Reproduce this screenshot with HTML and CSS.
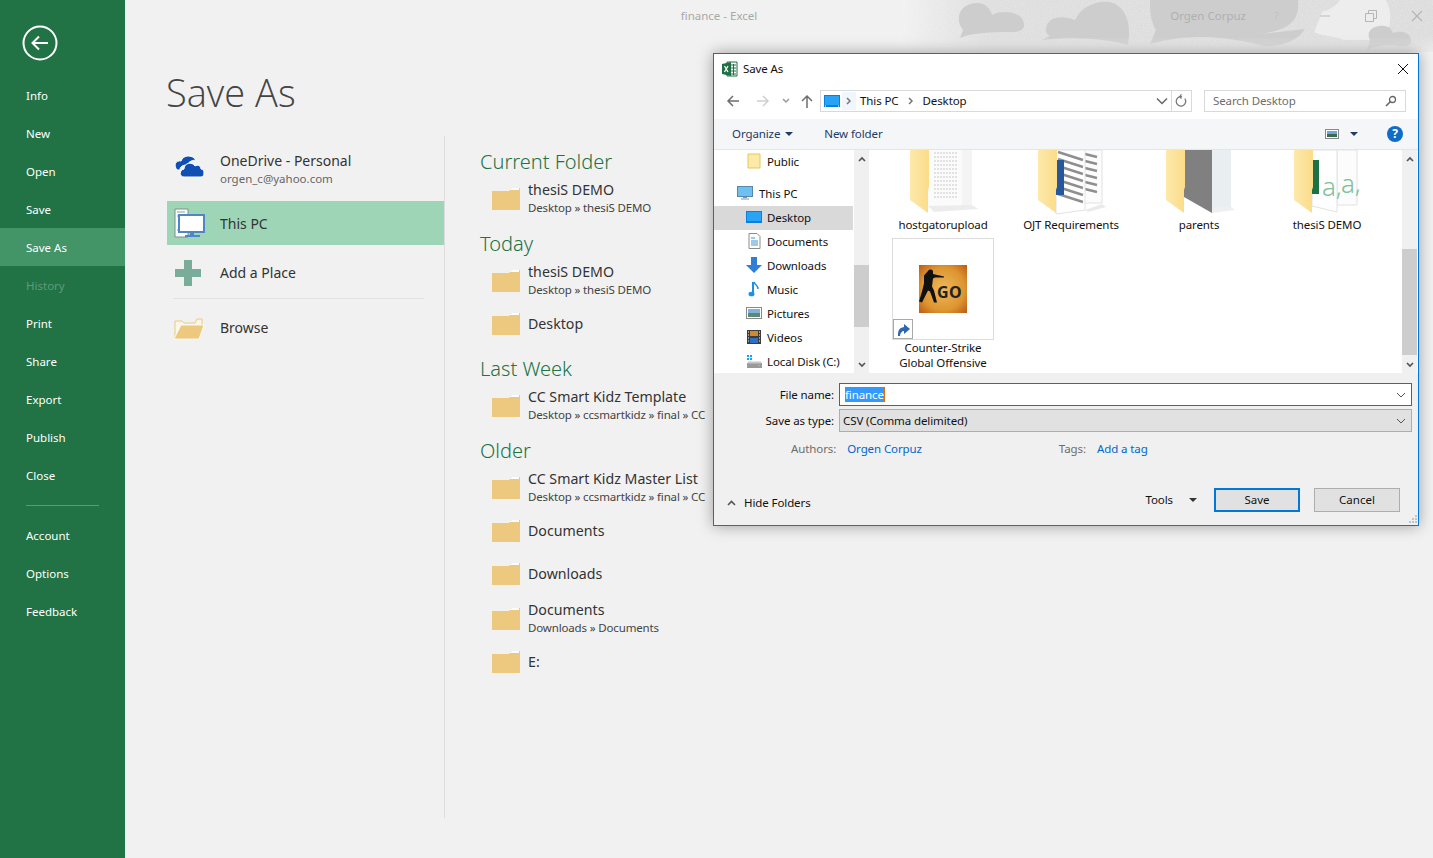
FILE: index.html
```html
<!DOCTYPE html>
<html lang="en">
<head>
    <meta charset="UTF-8">
    <title>Save As</title>
    <link rel="stylesheet" href="styles.css">
</head>
<body>
    <svg class="sprite" width="0" height="0">
        <defs>
            <symbol id="recent-folder" viewBox="0 0 28 24">
                <path d="M0 5h17l3-3h8v22H0z" fill="#edc87f"/>
                <path d="M18 4l2-2h7v2z" fill="#fff"/>
            </symbol>
            <linearGradient id="folder-fill" x1="0" y1="0" x2="1" y2="0">
                <stop offset="0" stop-color="#fde9ab"/>
                <stop offset="1" stop-color="#fbdc89"/>
            </linearGradient>
            <symbol id="folder-front" viewBox="0 0 70 66">
                <path d="M0 0h19v37l-1 3v23L0 50z" fill="url(#folder-fill)"/>
            </symbol>
        </defs>
    </svg>

    <aside class="sidebar">
        <svg class="back" width="36" height="36" viewBox="0 0 36 36" fill="none" stroke="#fff">
            <circle cx="18" cy="18" r="16.5" stroke-width="2"/>
            <path d="M11 18h15M17 11.500l-6.500 6.500 6.500 6.500" stroke-width="2"/>
        </svg>
        <nav class="nav">
            <a>Info</a>
            <a>New</a>
            <a>Open</a>
            <a>Save</a>
            <a class="active">Save As</a>
            <a class="disabled">History</a>
            <a>Print</a>
            <a>Share</a>
            <a>Export</a>
            <a>Publish</a>
            <a>Close</a>
            <hr>
            <a>Account</a>
            <a>Options</a>
            <a>Feedback</a>
        </nav>
    </aside>

    <main class="main">
        <header class="titlebar">
            finance - Excel
            <svg class="decor" width="533" height="52" viewBox="0 0 533 52">
                <defs>
                    <linearGradient id="decor-fade" x1="0" y1="0" x2="1" y2="0">
                        <stop offset="0" stop-color="#dedede" stop-opacity="0"/>
                        <stop offset="0.16" stop-color="#dedede"/>
                        <stop offset="1" stop-color="#dcdcdc"/>
                    </linearGradient>
                    <linearGradient id="decor-bottom" x1="0" y1="0" x2="0" y2="1">
                        <stop offset="0.7" stop-color="#f1f1f1" stop-opacity="0"/>
                        <stop offset="1" stop-color="#f1f1f1" stop-opacity="0.7"/>
                    </linearGradient>
                    <filter id="grain">
                        <feTurbulence type="fractalNoise" baseFrequency="0.9" numOctaves="2" seed="4"/>
                        <feColorMatrix values="0 0 0 0 1  0 0 0 0 1  0 0 0 0 1  1.6 0 0 0 -0.6"/>
                    </filter>
                </defs>
                <rect width="533" height="52" fill="url(#decor-fade)"/>
                <rect x="40" width="493" height="52" filter="url(#grain)" opacity="0.3"/>
                <path d="M440 0h46c6 12 6 26-2 40l-40 0c-8-4-24-4-30-8l8-20c6-2 12-4 18-12z" fill="#ededed"/>
                <g fill="#cdcdcd">
                    <path d="M60 38l3-8C55 20 58 5 75 3c10-1 15 5 17 12 8-5 30-5 32 9 1 6-6 9-14 8-20 0-40 1-50 6z"/>
                    <path d="M146 30c0-12 14-16 29-10 5-12 20-20 35-18 15 4 22 20 18 43-18-5-48-9-86-5l8-4c-3-1-4-4-4-6z"/>
                    <path d="M250 0h148c2 20-8 30-38 34l45-5c-5 9-20 18-40 17-25-6-65-16-115-2l6-14c-6-10-6-20-6-30z"/>
                    <path d="M467 50l3-10c-5-10 5-15 15-14 5 1 7 4 8 7 7-3 19-1 18 9-1 4-6 5-11 4-10-2-25 0-33 4z"/>
                </g>
                <rect width="533" height="52" fill="url(#decor-bottom)"/>
            </svg>
            <div class="window-controls">
                <span class="user">Orgen Corpuz</span>
                <span class="help">?</span>
                <svg class="win-icon min" width="12" height="12" viewBox="0 0 12 12"><path d="M1 6h10" stroke="#bdbdbd" fill="none"/></svg>
                <svg class="win-icon restore" width="12" height="12" viewBox="0 0 12 12"><path d="M.5 3.500h8v8h-8zM3.500 3V.5h8v8H9" stroke="#b5b5b5" fill="none"/></svg>
                <svg class="win-icon close" width="12" height="12" viewBox="0 0 12 12"><path d="M1 1l10 10M11 1L1 11" stroke="#b5b5b5" stroke-width="1.200" fill="none"/></svg>
            </div>
        </header>

        <h1 class="page-title">Save As</h1>

        <div class="columns">
            <section class="places">
                <div class="place">
                    <svg class="place-icon cloud" width="32" height="24" viewBox="0 0 32 24">
                        <path d="M4 16C0 11 3 6 8 7c2-6 11-7 15-1-5 0-8 3-9 5-5 0-7 2-7 5z" fill="#0f4fb3" stroke="#fff"/>
                        <path d="M11 23c-5 0-5-7 0-8 0-6 8-8 11-3 3-2 6 0 6 3 4 0 4 8 0 8z" fill="#0f4fb3" stroke="#fff"/>
                    </svg>
                    <div>
                        <div class="place-name">OneDrive - Personal</div>
                        <div class="place-sub">orgen_c@yahoo.com</div>
                    </div>
                </div>
                <div class="place selected">
                    <svg class="place-icon" width="32" height="30" viewBox="0 0 32 30">
                        <path d="M2 1h13v28H2z" fill="#fff" stroke="#7b8f85"/>
                        <path d="M4 4h8M4 8h8M4 22h8" stroke="#8aa196"/>
                        <rect x="6" y="7" width="25" height="17" fill="#fff" stroke="#4f86c6" stroke-width="2"/>
                        <path d="M17 24h4v3h-4zM12 27h15v2H12z" fill="#4f86c6"/>
                    </svg>
                    <div class="place-name">This PC</div>
                </div>
                <div class="place">
                    <svg class="place-icon" width="32" height="28" viewBox="0 0 32 28">
                        <path d="M11 1h8v9h9v8h-9v9h-8v-9H2v-8h9z" fill="#7aac9a"/>
                    </svg>
                    <div class="place-name">Add a Place</div>
                </div>
                <hr class="place-rule">
                <div class="place">
                    <svg class="place-icon" width="32" height="24" viewBox="0 0 32 24">
                        <path d="M2 22V5h7l2 2h11l2-4h5v7" fill="#fdf6e6" stroke="#edc87f"/>
                        <path d="M8 9h23l-5 14H1z" fill="#edc87f" stroke="#fff" stroke-width=".8"/>
                    </svg>
                    <div class="place-name">Browse</div>
                </div>
            </section>

            <section class="recent">
                <h2>Current Folder</h2>
                <div class="recent-item">
                    <svg class="recent-icon"><use href="#recent-folder"/></svg>
                    <div>
                        <div class="recent-name">thesiS DEMO</div>
                        <div class="recent-path">Desktop » thesiS DEMO</div>
                    </div>
                </div>

                <h2>Today</h2>
                <div class="recent-item">
                    <svg class="recent-icon"><use href="#recent-folder"/></svg>
                    <div>
                        <div class="recent-name">thesiS DEMO</div>
                        <div class="recent-path">Desktop » thesiS DEMO</div>
                    </div>
                </div>
                <div class="recent-item">
                    <svg class="recent-icon"><use href="#recent-folder"/></svg>
                    <div class="recent-name">Desktop</div>
                </div>

                <h2>Last Week</h2>
                <div class="recent-item">
                    <svg class="recent-icon"><use href="#recent-folder"/></svg>
                    <div>
                        <div class="recent-name">CC Smart Kidz Template</div>
                        <div class="recent-path">Desktop » ccsmartkidz » final » CC</div>
                    </div>
                </div>

                <h2>Older</h2>
                <div class="recent-item">
                    <svg class="recent-icon"><use href="#recent-folder"/></svg>
                    <div>
                        <div class="recent-name">CC Smart Kidz Master List</div>
                        <div class="recent-path">Desktop » ccsmartkidz » final » CC</div>
                    </div>
                </div>
                <div class="recent-item">
                    <svg class="recent-icon"><use href="#recent-folder"/></svg>
                    <div class="recent-name">Documents</div>
                </div>
                <div class="recent-item">
                    <svg class="recent-icon"><use href="#recent-folder"/></svg>
                    <div class="recent-name">Downloads</div>
                </div>
                <div class="recent-item nudge">
                    <svg class="recent-icon"><use href="#recent-folder"/></svg>
                    <div>
                        <div class="recent-name">Documents</div>
                        <div class="recent-path">Downloads » Documents</div>
                    </div>
                </div>
                <div class="recent-item">
                    <svg class="recent-icon"><use href="#recent-folder"/></svg>
                    <div class="recent-name">E:</div>
                </div>
            </section>
        </div>
    </main>

    <!-- Save As dialog -->
    <div class="dialog">
        <div class="dlg-title">
            <svg width="16" height="16" viewBox="0 0 16 16">
                <path d="M5 1h10v14H5z" fill="#fff" stroke="#1e7145"/>
                <path d="M9 4h5M9 7h5M9 10h5M9 13h5M11.500 3v11" stroke="#1e7145"/>
                <path d="M0 3l9-2v14l-9-2z" fill="#1e7145"/>
                <path d="M2.500 5l3.500 6M6 5l-3.500 6" stroke="#fff" stroke-width="1.300"/>
            </svg>
            <span class="dlg-title-text">Save As</span>
            <svg class="dlg-close" width="12" height="12" viewBox="0 0 12 12"><path d="M1 1l10 10M11 1L1 11" stroke="#111" fill="none"/></svg>
        </div>

        <div class="dlg-address">
            <svg class="addr-btn back-btn" width="14" height="14" viewBox="0 0 14 14"><path d="M13 7H2M7 2L2 7l5 5" stroke="#6e6e6e" stroke-width="1.500" fill="none"/></svg>
            <svg class="addr-btn fwd-btn" width="14" height="14" viewBox="0 0 14 14"><path d="M1 7h11M7 2l5 5-5 5" stroke="#d0d0d0" stroke-width="1.500" fill="none"/></svg>
            <svg class="addr-btn drop-btn" width="8" height="6" viewBox="0 0 8 6"><path d="M1 1l3 3 3-3" stroke="#9a9a9a" stroke-width="1.500" fill="none"/></svg>
            <svg class="addr-btn up-btn" width="14" height="14" viewBox="0 0 14 14"><path d="M7 14V2M2 7l5-5 5 5" stroke="#6e6e6e" stroke-width="1.500" fill="none"/></svg>
            <div class="breadcrumb">
                <svg class="crumb-pc" width="16" height="12" viewBox="0 0 16 12"><rect width="16" height="12" fill="#0a7fe0"/><rect x="1" y="1" width="14" height="9" fill="#29a4f5"/><path d="M1 11h1M14 11h1" stroke="#fff"/></svg>
                <span class="crumb-box"><svg width="6" height="8" viewBox="0 0 6 8"><path d="M1 1l3 3-3 3" stroke="#777" stroke-width="1.500" fill="none"/></svg></span>
                <span>This PC</span>
                <svg class="crumb-sep" width="6" height="8" viewBox="0 0 6 8"><path d="M1 1l3 3-3 3" stroke="#777" stroke-width="1.500" fill="none"/></svg>
                <span>Desktop</span>
                <svg class="crumb-drop" width="12" height="8" viewBox="0 0 12 8"><path d="M1 1.500l5 5 5-5" stroke="#666" stroke-width="1.500" fill="none"/></svg>
                <svg class="crumb-refresh" width="20" height="20" viewBox="0 0 20 20"><path d="M13.500 7.500a5 5 0 1 1-3-2H8M10 3l-2 2.500 2 2" stroke="#777" stroke-width="1.300" fill="none"/></svg>
            </div>
            <div class="search">
                <span>Search Desktop</span>
                <svg width="12" height="12" viewBox="0 0 12 12"><circle cx="7.500" cy="4.500" r="3" stroke="#666" stroke-width="1.300" fill="none"/><path d="M5.500 6.500L1 11" stroke="#666" stroke-width="1.600"/></svg>
            </div>
        </div>

        <div class="dlg-toolbar">
            <span class="tool-btn">Organize</span>
            <i class="caret navy"></i>
            <span class="tool-btn new-folder">New folder</span>
            <svg class="view-icon" width="14" height="10" viewBox="0 0 14 10"><rect x=".5" y=".5" width="13" height="9" fill="#fff" stroke="#8a8a8a"/><rect x="2" y="2" width="10" height="3" fill="#6fa8d6"/><rect x="2" y="5" width="10" height="3" fill="#3c6b52"/></svg>
            <i class="caret navy view-caret"></i>
            <span class="help-btn">?</span>
        </div>

        <div class="dlg-body">
            <div class="tree">
                <div class="tree-item indent"><svg width="14" height="16" viewBox="0 0 14 16"><path d="M1 1h12v14H1z" fill="#fde9a8" stroke="#eac55c"/></svg>Public</div>
                <div class="tree-item root"><svg width="16" height="14" viewBox="0 0 16 14"><rect x=".5" y=".5" width="15" height="10" fill="#6cc0f2" stroke="#5a87a8"/><path d="M6 11h4v1H6zM4 12.500h8v1H4z" fill="#7a97ad"/></svg>This PC</div>
                <div class="tree-item indent current"><svg width="16" height="12" viewBox="0 0 16 12"><rect width="16" height="12" fill="#0a7fe0"/><rect x="1" y="1" width="14" height="9" fill="#29a4f5"/></svg>Desktop</div>
                <div class="tree-item indent"><svg width="14" height="16" viewBox="0 0 14 16"><path d="M2 .5h8l3 3v12H2z" fill="#fff" stroke="#8c8c8c"/><path d="M4 5h4M4 8h7M4 10h7M4 12h7" stroke="#3b93d6"/></svg>Documents</div>
                <div class="tree-item indent"><svg width="16" height="16" viewBox="0 0 16 16"><path d="M5 0h6v8h5l-8 8-8-8h5z" fill="#2f7fd8"/></svg>Downloads</div>
                <div class="tree-item indent"><svg width="14" height="16" viewBox="0 0 14 16"><path d="M6 1v11" stroke="#1c8fe8" stroke-width="2"/><ellipse cx="4.500" cy="13" rx="3" ry="2.300" fill="#1c8fe8"/><path d="M7 1c1 3 4 3 4 7" stroke="#1c8fe8" stroke-width="1.500" fill="none"/></svg>Music</div>
                <div class="tree-item indent"><svg width="16" height="12" viewBox="0 0 16 12"><rect x=".5" y=".5" width="15" height="11" fill="#fff" stroke="#8a8a8a"/><rect x="2" y="2" width="12" height="4" fill="#7fb3dc"/><rect x="2" y="6" width="12" height="4" fill="#5d8a74"/></svg>Pictures</div>
                <div class="tree-item indent"><svg width="14" height="14" viewBox="0 0 14 14"><rect width="14" height="14" fill="#3c3c3c"/><rect x="3" y="1" width="8" height="5" fill="#d08a2d"/><rect x="3" y="8" width="8" height="5" fill="#2f6fc4"/><path d="M1 2h1M1 5h1M1 8h1M1 11h1M12 2h1M12 5h1M12 8h1M12 11h1" stroke="#fff"/></svg>Videos</div>
                <div class="tree-item indent"><svg width="16" height="14" viewBox="0 0 16 14"><path d="M1 1h2v2H1zM4 1h2v2H4zM1 4h2v2H1zM4 4h2v2H4z" fill="#19a3ee"/><rect x="1" y="9" width="15" height="5" fill="#9a9a9a"/><rect x="2" y="7.500" width="13" height="2" fill="#c8c8c8"/><path d="M12 11.500h2" stroke="#6fe07f"/></svg>Local Disk (C:)</div>
            </div>
            <div class="scrollbar tree-scroll">
                <svg class="arrow-up" width="8" height="6" viewBox="0 0 8 6"><path d="M1 5l3-3 3 3" stroke="#555" stroke-width="1.700" fill="none"/></svg>
                <div class="thumb"></div>
                <svg class="arrow-down" width="8" height="6" viewBox="0 0 8 6"><path d="M1 1l3 3 3-3" stroke="#555" stroke-width="1.700" fill="none"/></svg>
            </div>

            <div class="files">
                <div class="file">
                    <svg class="file-icon" width="70" height="66" viewBox="0 0 70 66">
                        <path d="M50 0h12v55l-12 2z" fill="#f4f4f4"/>
                        <path d="M18 0h34v58H18z" fill="#fbfbfb"/>
                        <path d="M24 3h24M24 7h24M24 11h24M24 15h24M24 19h24M24 23h24M24 27h24M24 31h24M24 35h24M24 39h24M24 43h24M24 47h24" stroke="#c9c9c9" stroke-dasharray="2 1"/>
                        <path d="M18 56l44-1 6 4-44 3z" fill="#ececec"/>
                        <use href="#folder-front"/>
                    </svg>
                    <div class="file-name">hostgatorupload</div>
                </div>
                <div class="file">
                    <svg class="file-icon" width="70" height="66" viewBox="0 0 70 66">
                        <path d="M44 0h20v53H44z" fill="#fcfcfc" stroke="#e2e2e2"/>
                        <path d="M47 4l12 3M47 11l12 3M47 18l12 3M47 25l12 3M47 32l12 3M47 39l12 3" stroke="#8f8f8f" stroke-width="2.500"/>
                        <path d="M18 0h29v60l-29 4z" fill="#fff" stroke="#e2e2e2"/>
                        <path d="M20 2l25 8M20 9l25 8M20 16l25 8M20 23l25 8M20 30l25 8M20 37l25 8M20 44l25 8" stroke="#8f8f8f" stroke-width="2.500"/>
                        <path d="M18 10h8v35h-8z" fill="#26569b"/>
                        <path d="M47 60l17-6 4 3-18 5z" fill="#eaeaea"/>
                        <use href="#folder-front"/>
                    </svg>
                    <div class="file-name">OJT Requirements</div>
                </div>
                <div class="file">
                    <svg class="file-icon" width="70" height="66" viewBox="0 0 70 66">
                        <path d="M46 0h19v57H46z" fill="#e9eef1"/>
                        <path d="M18 0h28v63l-28-16z" fill="#808080"/>
                        <path d="M46 57h19l4 3-23 3z" fill="#efefef"/>
                        <use href="#folder-front"/>
                    </svg>
                    <div class="file-name">parents</div>
                </div>
                <div class="file">
                    <svg class="file-icon" width="70" height="66" viewBox="0 0 70 66">
                        <path d="M43 0h20v55H43z" fill="#fcfcfc" stroke="#e2e2e2"/>
                        <path d="M18 0h25v62l-25-6z" fill="#fff" stroke="#e2e2e2"/>
                        <path d="M18 10h7v34h-7z" fill="#1e7145"/>
                        <text class="sheet-letter" x="28" y="46">a,</text>
                        <text class="sheet-letter" x="47" y="43">a,</text>
                        <use href="#folder-front"/>
                    </svg>
                    <div class="file-name">thesiS DEMO</div>
                </div>
                <div class="file shortcut">
                    <div class="tile">
                        <svg class="game-logo" width="48" height="48" viewBox="0 0 48 48">
                            <defs>
                                <radialGradient id="game-bg" r="0.75">
                                    <stop offset="0" stop-color="#edb95c"/>
                                    <stop offset="0.6" stop-color="#dd9530"/>
                                    <stop offset="1" stop-color="#b54f10"/>
                                </radialGradient>
                            </defs>
                            <rect width="48" height="48" fill="url(#game-bg)"/>
                            <path d="M9 6c1-2 4-2 5 0v3l11 2.500v1h-9l-2 1-1 8 2 4 3 12h-3l-4-11-2-1-3 6-3 6-3-1 3-10 2-8v-8z" fill="#111"/>
                            <text class="game-text" x="18" y="33">GO</text>
                        </svg>
                        <svg class="shortcut-badge" width="20" height="20" viewBox="0 0 20 20">
                            <rect x=".5" y=".5" width="19" height="19" fill="#fff" stroke="#a8a8a8"/>
                            <path d="M5 17c0-6 1-8 6-9V5l6 5-6 5v-3c-2 0-4 2-4 5z" fill="#2f66ad"/>
                        </svg>
                    </div>
                    <div class="file-name">Counter-Strike<br>Global Offensive</div>
                </div>
            </div>
            <div class="scrollbar files-scroll">
                <svg class="arrow-up" width="8" height="6" viewBox="0 0 8 6"><path d="M1 5l3-3 3 3" stroke="#555" stroke-width="1.700" fill="none"/></svg>
                <div class="thumb"></div>
                <svg class="arrow-down" width="8" height="6" viewBox="0 0 8 6"><path d="M1 1l3 3 3-3" stroke="#555" stroke-width="1.700" fill="none"/></svg>
            </div>
        </div>

        <div class="dlg-form">
            <div class="form-row">
                <label>File name:</label>
                <div class="field name-field">
                    <span class="selected-text">finance</span>
                    <svg width="10" height="6" viewBox="0 0 10 6"><path d="M1 1l4 4 4-4" stroke="#555" fill="none"/></svg>
                </div>
            </div>
            <div class="form-row">
                <label>Save as type:</label>
                <div class="field type-field">
                    <span>CSV (Comma delimited)</span>
                    <svg width="10" height="6" viewBox="0 0 10 6"><path d="M1 1l4 4 4-4" stroke="#555" fill="none"/></svg>
                </div>
            </div>
            <div class="meta-row">
                <span class="meta-label authors">Authors:</span>
                <a class="meta-link author-link">Orgen Corpuz</a>
                <span class="meta-label">Tags:</span>
                <a class="meta-link">Add a tag</a>
            </div>
        </div>

        <div class="dlg-footer">
            <svg class="hide-arrow" width="9" height="6" viewBox="0 0 9 6"><path d="M1 5l3.500-3.500L8 5" stroke="#555" stroke-width="1.600" fill="none"/></svg>
            <span class="hide-folders">Hide Folders</span>
            <span class="tools">Tools</span>
            <i class="caret dark"></i>
            <button class="dlg-btn primary">Save</button>
            <button class="dlg-btn">Cancel</button>
        </div>
        <svg class="grip" width="10" height="10" viewBox="0 0 10 10"><path d="M8 1h2v2H8zM5 4h2v2H5zM8 4h2v2H8zM2 7h2v2H2zM5 7h2v2H5zM8 7h2v2H8z" fill="#c4c4c4"/></svg>
    </div>
</body>
</html>
```

FILE: styles.css
```css
* {
    box-sizing: border-box;
}
html, body {
    height: 100%;
    margin: 0;
}
body {
    display: flex;
    overflow: hidden;
    background-color: #f1f1f1;
    color: #333;
    font-family: "Noto Sans", "Open Sans", sans-serif;
    font-size: 11.5px;
}
.sprite {
    position: absolute;
}

/* Green backstage menu */
.sidebar {
    flex: 0 0 125px;
    background-color: #217346;
    color: #fff;
}
.back {
    display: block;
    margin: 25px 0 15px 22px;
}
.nav a {
    display: block;
    height: 38px;
    padding-left: 26px;
    line-height: 40px;
}
.nav a.active {
    background-color: #439467;
}
.nav a.disabled {
    color: #5f9c79;
}
.nav hr {
    width: 73px;
    height: 1px;
    margin: 11px 0 10px 26px;
    border: none;
    background-color: #5b9a77;
}

.main {
    flex: 1;
    position: relative;
    min-width: 0;
}
.titlebar {
    height: 32px;
    padding-right: 120px;
    color: #a8a8a8;
    line-height: 32px;
    text-align: center;
}
.decor {
    position: absolute;
    top: 0;
    right: 0;
}
.window-controls {
    position: absolute;
    top: 0;
    right: 0;
    display: flex;
    align-items: center;
    height: 32px;
    color: #b0b0b0;
}
.help {
    margin-left: 28px;
    color: #c2c2c2;
}
.win-icon.min {
    margin-left: 40px;
}
.win-icon.restore {
    margin-left: 34px;
}
.win-icon.close {
    margin: 0 10px 0 34px;
}

.page-title {
    height: 50px;
    margin: 35px 0 0 41px;
    color: #444;
    font-family: "Open Sans", sans-serif;
    font-size: 38px;
    font-weight: 300;
    line-height: 50px;
}
.columns {
    display: flex;
    height: 682px;
    margin: 19px 0 0 42px;
}

.places {
    flex: 0 0 278px;
    padding-top: 11px;
    border-right: 1px solid #dcdcdc;
}
.place {
    display: flex;
    align-items: center;
    height: 44px;
    margin-bottom: 10px;
    padding-bottom: 1px;
    color: #333;
}
.place:nth-child(2) {
    margin-bottom: 6px;
}
.place:nth-child(3) {
    margin-bottom: 0;
}
.place.selected {
    padding-bottom: 0;
    background-color: #9fd5b7;
}
.place-icon {
    flex: 0 0 32px;
    margin: 0 15px 0 6px;
}
.place-icon.cloud {
    margin-bottom: 6px;
}
.place-name {
    font-size: 14px;
    line-height: 19px;
}
.place-sub {
    color: #666;
    line-height: 17px;
}
.place-rule {
    height: 1px;
    margin: 3px 20px 7px 6px;
    border: none;
    background-color: #e1e1e1;
}

.recent {
    flex: 1;
    padding: 11px 0 0 35px;
    white-space: nowrap;
}
.recent h2 {
    height: 30px;
    margin: 0;
    color: #217346;
    font-size: 20px;
    font-weight: 300;
    line-height: 32px;
}
.recent h2:first-child {
    line-height: 30px;
}
.recent-item + h2 {
    margin-top: 9px;
}
.recent-item {
    display: flex;
    align-items: center;
    height: 43px;
}
.recent h2:first-child + .recent-item {
    margin: -1px 0 1px;
}
.recent-item.nudge {
    margin-top: 2px;
}
.recent-icon {
    flex: 0 0 28px;
    width: 28px;
    height: 24px;
    margin: 0 8px 0 12px;
}
.recent-name {
    color: #333;
    font-size: 14.200px;
    line-height: 19px;
}
.recent-item > .recent-name {
    padding-top: 2px;
}
.recent-path {
    color: #444;
    letter-spacing: -0.15px;
    line-height: 17px;
}

/* Save As dialog */
.dialog {
    position: absolute;
    top: 53px;
    left: 713px;
    display: flex;
    flex-direction: column;
    width: 706px;
    height: 473px;
    border: 1px solid #0078d7;
    background-color: #f0f0f0;
    box-shadow: 0 0 14px rgba(0, 0, 0, 0.35);
    color: #111;
    letter-spacing: -0.1px;
}
.dlg-title {
    display: flex;
    align-items: center;
    height: 30px;
    padding-left: 8px;
    background-color: #fff;
}
.dlg-title-text {
    margin: 0 0 2px 5px;
}
.dlg-close {
    margin: 0 9px 0 auto;
}
.dlg-address {
    display: flex;
    align-items: center;
    height: 35px;
    padding: 0 12px 2px;
    background-color: #fff;
}
.fwd-btn {
    margin-left: 16px;
}
.drop-btn {
    margin-left: 12px;
}
.up-btn {
    margin-left: 10px;
}
.breadcrumb {
    display: flex;
    align-items: center;
    width: 372px;
    height: 22px;
    margin-left: 6px;
    padding-left: 3px;
    border: 1px solid #d9d9d9;
}
.crumb-box {
    display: flex;
    align-items: center;
    justify-content: center;
    width: 14px;
    height: 18px;
    margin: 0 4px 0 2px;
    background-color: #f0f6fc;
}
.crumb-sep {
    margin: 0 9px;
}
.crumb-drop {
    margin: 0 3px 0 auto;
}
.crumb-refresh {
    border-left: 1px solid #d9d9d9;
    height: 20px;
}
.search {
    display: flex;
    align-items: center;
    justify-content: space-between;
    width: 202px;
    height: 22px;
    margin-left: 12px;
    padding: 0 8px;
    border: 1px solid #d9d9d9;
    color: #6d6d6d;
}
.dlg-toolbar {
    display: flex;
    align-items: center;
    height: 31px;
    padding: 0 15px 0 18px;
    border-bottom: 1px solid #e5e5e5;
    background-color: #f5f6f7;
}
.tool-btn {
    margin-bottom: 2px;
    color: #1e3a66;
}
.new-folder {
    margin-left: 31px;
}
.caret {
    width: 0;
    height: 0;
    border-top: 4px solid #1e3a66;
    border-right: 4px solid transparent;
    border-left: 4px solid transparent;
}
.caret.navy {
    margin-left: 5px;
}
.caret.view-caret {
    margin-left: 11px;
}
.caret.dark {
    border-top-color: #333;
}
.view-icon {
    margin-left: auto;
}
.help-btn {
    width: 16px;
    height: 16px;
    margin-left: 29px;
    border-radius: 50%;
    background-color: #0f6cc8;
    color: #fff;
    font-size: 12px;
    font-weight: 700;
    line-height: 16px;
    text-align: center;
}

.dlg-body {
    display: flex;
    height: 223px;
    background-color: #fff;
}
.tree {
    flex: 0 0 140px;
    overflow: hidden;
}
.tree-item {
    display: flex;
    align-items: center;
    width: 139px;
    height: 24px;
    padding-bottom: 2px;
    gap: 5px;
}
.tree-item svg {
    flex: 0 0 16px;
}
.tree-item.indent {
    padding-left: 32px;
}
.tree-item.root {
    margin-top: 8px;
    padding-left: 23px;
    gap: 6px;
}
.tree-item.current {
    background-color: #d9d9d9;
}
.scrollbar {
    position: relative;
    flex: 0 0 15px;
    background-color: #f0f0f0;
}
.thumb {
    position: absolute;
    left: 0;
    width: 100%;
    background-color: #cdcdcd;
}
.tree-scroll .thumb {
    top: 115px;
    height: 62px;
}
.files-scroll {
    margin-right: 1px;
}
.files-scroll .thumb {
    top: 99px;
    height: 106px;
}
.arrow-up, .arrow-down {
    position: absolute;
    left: 4px;
}
.arrow-up {
    top: 6px;
}
.arrow-down {
    bottom: 5px;
}
.files {
    flex: 1;
    display: grid;
    grid-template-columns: repeat(4, 128px);
    grid-auto-rows: min-content;
    align-content: start;
    overflow: hidden;
    padding-left: 8px;
    border-left: 2px solid #fff;
}
.file {
    height: 88px;
    text-align: center;
    line-height: 15px;
}
.file-icon {
    display: block;
    margin: 0 0 0 31px;
}
.file-name {
    margin-top: 1px;
}
.sheet-letter {
    fill: #7fc09a;
    font-size: 26px;
    font-weight: 300;
}
.shortcut {
    height: auto;
}
.tile {
    position: relative;
    display: flex;
    align-items: center;
    justify-content: center;
    width: 102px;
    height: 102px;
    margin-left: 13px;
    border: 1px solid #dcdcdc;
}
.shortcut-badge {
    position: absolute;
    bottom: 0;
    left: 0;
}
.game-text {
    fill: #222;
    font-size: 16px;
    font-weight: 700;
    letter-spacing: 0.5px;
}
.shortcut .file-name {
    margin-top: 0;
}

.dlg-form {
    padding: 10px 6px 0 0;
}
.form-row {
    display: flex;
    align-items: center;
    height: 23px;
    margin-bottom: 3px;
}
.form-row label {
    flex: 0 0 120px;
    text-align: right;
}
.field {
    flex: 1;
    display: flex;
    align-items: center;
    justify-content: space-between;
    height: 23px;
    margin-left: 5px;
    padding: 0 3px;
    border: 1px solid #adadad;
    background-color: #e1e1e1;
}
.field svg {
    margin-right: 2px;
}
.name-field {
    padding-left: 5px;
    border-color: #0078d7;
    background-color: #fff;
}
.selected-text {
    border-right: 1px solid #e07000;
    background-color: #3399ff;
    color: #fff;
    line-height: 15px;
}
.meta-row {
    display: flex;
    align-items: center;
    margin-top: 9px;
    line-height: 16px;
}
.meta-label {
    margin-right: 11px;
    color: #6d6d6d;
}
.meta-label.authors {
    margin-left: 77px;
}
.meta-link {
    color: #0066cc;
}
.author-link {
    margin-right: 137px;
}
.dlg-footer {
    display: flex;
    align-items: center;
    height: 25px;
    margin-top: 30px;
    padding: 0 18px 0 13px;
}
.hide-arrow, .hide-folders {
    margin-top: 6px;
}
.hide-folders {
    margin-left: 8px;
}
.tools {
    margin-left: auto;
}
.dlg-footer .caret {
    margin-left: 16px;
}
.dlg-btn {
    width: 86px;
    height: 24px;
    margin-left: 14px;
    padding: 0;
    border: 1px solid #adadad;
    background-color: #e1e1e1;
    color: #111;
    font: inherit;
}
.dlg-btn.primary {
    margin-left: 17px;
    border: 2px solid #0078d7;
}
.grip {
    position: absolute;
    right: 1px;
    bottom: 1px;
}
```
